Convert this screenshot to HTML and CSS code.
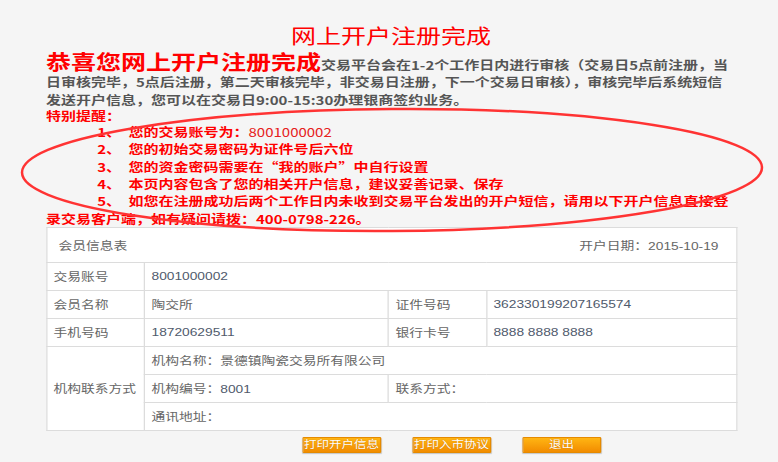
FILE: index.html
```html
<!DOCTYPE html>
<html lang="zh-CN">
<head>
    <meta charset="UTF-8">
    <title>网上开户注册完成</title>
    <link rel="stylesheet" href="styles.css">
</head>
<body>
    <div class="page">
        <div class="main">
            <h1 class="title">网上开户注册完成</h1>
            <p class="intro"><span class="big">恭喜您网上开户注册完成</span>交易平台会在1-2个工作日内进行审核（交易日5点前注册，当日审核完毕，5点后注册，第二天审核完毕，非交易日注册，下一个交易日审核），审核完毕后系统短信发送开户信息，您可以在交易日9:00-15:30办理银商签约业务。</p>
            <div class="notice">
                <p class="remind">特别提醒：</p>
                <p class="tip"><span class="no">1、</span>您的交易账号为：<span class="acc">8001000002</span></p>
                <p class="tip"><span class="no">2、</span>您的初始交易密码为证件号后六位</p>
                <p class="tip"><span class="no">3、</span>您的资金密码需要在“我的账户”中自行设置</p>
                <p class="tip"><span class="no">4、</span>本页内容包含了您的相关开户信息，建议妥善记录、保存</p>
                <p class="tip"><span class="no">5、</span>如您在注册成功后两个工作日内未收到交易平台发出的开户短信，请用以下开户信息直接登录交易客户端，如有疑问请拨：400-0798-226。</p>
            </div>

            <table class="info">
                <colgroup>
                    <col class="c1">
                    <col class="c2">
                    <col class="c3">
                    <col class="c4">
                </colgroup>
                <tr class="head">
                    <td colspan="2" class="caption">会员信息表</td>
                    <td colspan="2" class="date">开户日期：2015-10-19</td>
                </tr>
                <tr>
                    <td>交易账号</td>
                    <td colspan="3" class="val">8001000002</td>
                </tr>
                <tr>
                    <td>会员名称</td>
                    <td>陶交所</td>
                    <td>证件号码</td>
                    <td class="val">362330199207165574</td>
                </tr>
                <tr>
                    <td>手机号码</td>
                    <td class="val">18720629511</td>
                    <td>银行卡号</td>
                    <td class="val">8888 8888 8888</td>
                </tr>
                <tr>
                    <td rowspan="3">机构联系方式</td>
                    <td colspan="3">机构名称：景德镇陶瓷交易所有限公司</td>
                </tr>
                <tr>
                    <td>机构编号：<span class="val">8001</span></td>
                    <td colspan="2">联系方式：</td>
                </tr>
                <tr>
                    <td colspan="3">通讯地址：</td>
                </tr>
            </table>

            <div class="actions">
                <button type="button">打印开户信息</button>
                <button type="button">打印入市协议</button>
                <button type="button">退出</button>
            </div>
        </div>
    </div>

    <svg class="mark" width="778" height="462" viewBox="0 0 778 462">
        <ellipse cx="392" cy="170" rx="370" ry="61" transform="rotate(-0.4 392 170)" fill="none" stroke="#f33" stroke-width="2.5"/>
    </svg>
</body>
</html>
```

FILE: styles.css
```css
* {
    margin: 0;
    padding: 0;
    box-sizing: border-box;
}

body {
    background-color: #f5f5f5;
    font-family: "Liberation Sans", "Noto Sans CJK SC", sans-serif;
    width: 778px;
    height: 462px;
    overflow: hidden;
    position: relative;
}

/* the shot is stretched sideways, so the whole page is widened */
.page {
    width: 622.4px;
    transform: scaleX(1.25);
    transform-origin: 0 0;
}

.main {
    margin-left: 36.8px;
    width: 552px;
    padding-top: 19px;
}

.title {
    color: #f00;
    font-family: "Noto Sans CJK SC", sans-serif;
    font-size: 20px;
    font-weight: normal;
    line-height: 34px;
    text-align: center;
}

.intro,
.notice {
    font-family: "Noto Sans CJK SC", sans-serif;
    font-size: 12px;
    font-weight: bold;
    line-height: 17.3px;
}

.intro {
    margin-top: 3px;
    color: #555;
}

.intro .big {
    font-size: 20px;
    color: #f00;
    line-height: 0;
}

.notice {
    color: #f00;
}

.notice .remind {
    line-height: 15.3px;
}

.tip {
    text-indent: 41px;
}

.tip .no {
    display: inline-block;
    width: 25px;
    text-indent: 0;
}

.acc {
    font-weight: normal;
    color: #e62020;
}

.info {
    width: 552px;
    border-collapse: collapse;
    table-layout: fixed;
    background-color: #fff;
    font-size: 11px;
    color: #666;
}

.c1 {
    width: 78.4px;
}

.c2 {
    width: 195.2px;
}

.c3 {
    width: 78.4px;
}

.c4 {
    width: 200px;
}

.info td {
    border: 1px solid #dcdcdc;
    height: 28px;
    padding: 0 5px;
    white-space: nowrap;
}

.info .head td {
    height: 35px;
}

.info .caption {
    padding-left: 9px;
    border-right: none;
}

.info .date {
    text-align: right;
    padding-right: 14px;
    border-left: none;
}

.val {
    color: #4f5a6c;
}

.actions {
    display: flex;
    gap: 24.8px;
    margin: 6px 0 0 204.8px;
}

button {
    width: 63.2px;
    height: 16px;
    font-family: "Liberation Sans", "Noto Sans CJK SC", sans-serif;
    font-size: 10px;
    line-height: 14px;
    color: #fff;
    background: linear-gradient(#ffb513, #f28c00);
    border: 1px solid #e58a00;
    border-radius: 1px;
    box-shadow: 0 1px 1px rgba(0, 0, 0, 0.2);
    text-shadow: 0 0 1px rgba(160, 80, 0, 0.6);
    cursor: pointer;
}

.mark {
    position: absolute;
    left: 0;
    top: 0;
    pointer-events: none;
}
```
